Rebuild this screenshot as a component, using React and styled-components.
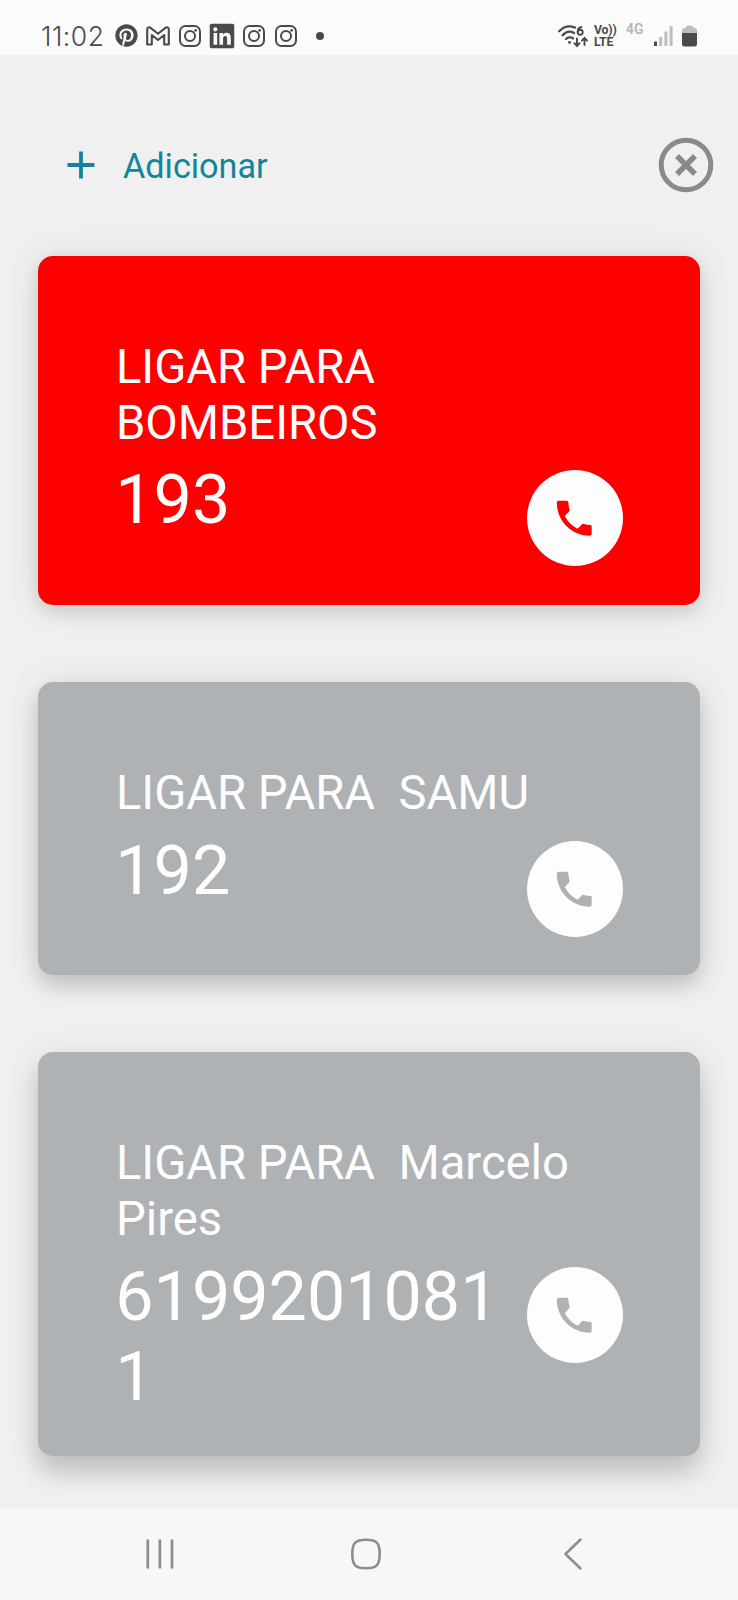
import styled, { createGlobalStyle } from 'styled-components';
import { FaPinterest, FaLinkedin } from 'react-icons/fa';

const GlobalStyle = createGlobalStyle`
  * {
    box-sizing: border-box;
  }
  body {
    margin: 0;
    background: #f0f0f0;
    font-family: Roboto, "Liberation Sans", sans-serif;
  }
`;

const Screen = styled.div`
  display: flex;
  flex-direction: column;
  width: 738px;
  height: 1600px;
  overflow: hidden;
  background: #f0f0f0;
`;

const StatusBar = styled.header`
  display: flex;
  justify-content: space-between;
  height: 55px;
  padding: 17px 41px 0 41px;
  background: #fbfbfb;
  color: #4a4a4a;
`;

const StatusGroup = styled.div`
  display: flex;
  align-items: center;
  height: 37px;
`;

const Clock = styled.span`
  width: 74px;
  font-family: Inter, sans-serif;
  font-size: 26.5px;
  font-weight: 300;
  letter-spacing: 0.5px;
`;

const Notifications = styled.div`
  display: flex;
  align-items: center;
  gap: 8px;

  svg {
    display: block;
  }
`;

const LinkedinIcon = styled(FaLinkedin)`
  width: 28px;
  height: 28px;
  margin: 0 -2px;
`;

const MoreDot = styled.span`
  width: 8px;
  height: 8px;
  margin-left: 10px;
  border-radius: 50%;
  background: #4a4a4a;
`;

const VoLte = styled.div`
  display: flex;
  flex-direction: column;
  width: 22px;
  margin: 2px 10px 0 5px;
  font-size: 12.3px;
  font-weight: 700;
  letter-spacing: -0.2px;
  line-height: 11.8px;
  white-space: nowrap;
`;

const NetworkType = styled.span`
  width: 20px;
  height: 28px;
  margin-right: 8px;
  color: #b3b3b3;
  font-size: 13.8px;
  font-weight: 600;
  line-height: 15px;
`;

const Toolbar = styled.div`
  display: flex;
  align-items: center;
  justify-content: space-between;
  height: 56px;
  margin: 82px 24px 63px 67px;
`;

const AddButton = styled.button`
  display: flex;
  align-items: center;
  gap: 28px;
  padding: 0;
  border: 0;
  background: none;
  color: #12859a;
  font-family: inherit;
  font-size: 34.2px;
  line-height: 40px;
`;

const AddLabel = styled.span`
  padding-top: 2px;
`;

const CloseButton = styled.button`
  display: flex;
  padding: 0;
  border: 0;
  background: none;
`;

const ContactList = styled.main`
  display: flex;
  flex: 1;
  flex-direction: column;
  gap: 77.5px;
  min-height: 0;
  padding: 0 38.3px;
`;

const Card = styled.section`
  flex: none;
  padding: 84px 77px 38.2px;
  border-radius: 15px;
  background: ${({ $color }) => $color};
  box-shadow: ${({ $shadow }) => $shadow};
  color: #fdfdfd;
`;

const CardTitle = styled.h2`
  margin: 0 0 10px;
  padding-left: 0.6px;
  font-size: 47.2px;
  font-weight: 400;
  line-height: 55.7px;
  white-space: pre-wrap;
`;

const CardRow = styled.div`
  display: flex;
  align-items: flex-start;
`;

const PhoneNumber = styled.span`
  flex: 1;
  min-width: 0;
  font-size: 68.2px;
  line-height: 79.8px;
  overflow-wrap: anywhere;
`;

const CallButton = styled.button`
  display: flex;
  flex: none;
  align-items: center;
  justify-content: center;
  width: 96px;
  height: 96px;
  margin-top: 9px;
  padding: 0;
  border: 0;
  border-radius: 50%;
  background: #fdfdfd;
  color: ${({ $color }) => $color};
`;

const NavBar = styled.nav`
  display: flex;
  align-items: center;
  justify-content: space-between;
  height: 92px;
  padding: 0 155px 0 144px;
  background: #f7f7f9;
`;

const InstagramIcon = () => (
  <svg width="24" height="24" viewBox="0 0 24 24" fill="none" stroke="currentColor" strokeWidth="2">
    <rect x="2" y="2" width="20" height="20" rx="5.5" />
    <circle cx="12" cy="12" r="5" />
    <circle cx="17.6" cy="6.4" r="1.3" fill="currentColor" stroke="none" />
  </svg>
);

const GmailIcon = () => (
  <svg width="24" height="24" viewBox="0 0 24 24" fill="none" stroke="currentColor" strokeWidth="2.1" strokeLinejoin="round">
    <path d="M1.200 20.500V5.400C1.200 3.300 3.200 2.800 4.600 3.900L12 9.800l7.400-5.900C20.800 2.800 22.800 3.300 22.800 5.400v15.100h-4.600V11L12 16 5.800 11v9.500z" />
  </svg>
);

const WifiIcon = () => (
  <svg width="31" height="24" viewBox="0 0 31 24" fill="none" stroke="currentColor" strokeWidth="2.3" strokeLinecap="round">
    <path d="M1.200 7.200C6 2.300 12 1.600 17 3.600M4.600 11.200C8 7.600 12.500 7 16 9M8 15c2-2 5-2.300 7-.6" />
    <circle cx="11.500" cy="18.400" r="1.400" fill="currentColor" stroke="none" />
    <path d="M23.500 3C21 3.400 19.700 5.300 19.700 8" strokeWidth="1.900" />
    <circle cx="22.200" cy="8.300" r="2.500" strokeWidth="1.900" />
    <path d="M19 14.500v7.300m-2.600-2.600 2.600 2.800 2.600-2.800M26.500 21v-7m-2.600 2.600 2.600-2.800 2.600 2.800" strokeWidth="1.900" />
  </svg>
);

const SignalIcon = () => (
  <svg width="19" height="22" viewBox="0 0 19 22">
    <rect x="0" y="16.5" width="3" height="4.5" fill="#4a4a4a" />
    <g fill="#bdbdbd">
      <rect x="5.2" y="12" width="3" height="9" />
      <rect x="10.4" y="6.5" width="3" height="14.5" />
      <rect x="15.6" y="1" width="3" height="20" />
    </g>
  </svg>
);

const Battery = styled.svg`
  width: 15px;
  height: 22px;
  margin-left: 9px;
`;

const BatteryIcon = () => (
  <Battery viewBox="0 0 15 22">
    <path d="M3 3 4.500 1.200Q5 .5 6 .5h3q1 0 1.500.7L12 3h.5Q15 3 15 5.500V9H0V5.500Q0 3 2.500 3z" fill="#bdbdbd" />
    <path d="M0 8h15v11q0 2.500-2.500 2.500h-10Q0 21.500 0 19z" fill="#4a4a4a" />
  </Battery>
);

const PlusIcon = () => (
  <svg width="28" height="28" viewBox="0 0 28 28" stroke="currentColor" strokeWidth="3.8">
    <path d="M14 .5v27M.5 14h27" />
  </svg>
);

const CloseIcon = () => (
  <svg width="56" height="56" viewBox="0 0 56 56" fill="none" stroke="#8a8a8a">
    <circle cx="28" cy="28" r="24.8" strokeWidth="5" />
    <path d="m19 19 18 18M37 19 19 37" strokeWidth="5.6" />
  </svg>
);

const PhoneIcon = () => (
  <svg width="46.5" height="46.5" viewBox="0 0 24 24" fill="currentColor">
    <path d="M20.500 15.500c-1.250 0-2.450-.2-3.570-.57-.35-.11-.74-.03-1.020.24l-2.200 2.200c-2.830-1.440-5.150-3.750-6.590-6.590l2.200-2.210c.28-.26.36-.65.25-1C9.200 6.450 9 5.250 9 4c0-.55-.45-1-1-1H4c-.55 0-1 .45-1 1 0 9.390 7.610 17 17 17 .55 0 1-.45 1-1v-3.500c0-.55-.2-1-.5-1z" />
  </svg>
);

const RecentsIcon = () => (
  <svg width="32" height="32" viewBox="0 0 32 32" stroke="#8d8d8f" strokeWidth="2.7" strokeLinecap="round">
    <path d="M3.8 2.500v27M15.900 2.500v27M28 2.500v27" />
  </svg>
);

const Home = styled.svg`
  width: 32px;
  height: 32px;
  margin-right: 7px;
`;

const HomeIcon = () => (
  <Home viewBox="0 0 32 32" fill="none" stroke="#8d8d8f" strokeWidth="2.6">
    <path d="M16 1.800c10.500 0 13.700 3 13.700 14.200S26.500 30.200 16 30.200 2.300 27.200 2.300 16 5.500 1.800 16 1.800z" />
  </Home>
);

const BackIcon = () => (
  <svg width="20" height="32" viewBox="0 0 20 32" fill="none" stroke="#8d8d8f" strokeWidth="2.5" strokeLinecap="round" strokeLinejoin="round">
    <path d="M17.500 1.500 2.500 16l15 14.500" />
  </svg>
);

const contacts = [
  {
    title: 'LIGAR PARA BOMBEIROS',
    number: '193',
    color: '#ff0000',
    shadow: '0 8px 18px rgba(0, 0, 0, 0.1), 0 2px 34px rgba(0, 0, 0, 0.1)',
  },
  {
    title: 'LIGAR PARA  SAMU',
    number: '192',
    color: '#aeb2b5',
    shadow: '0 12px 20px rgba(0, 0, 0, 0.14), 0 3px 34px rgba(0, 0, 0, 0.1)',
  },
  {
    title: 'LIGAR PARA  Marcelo Pires',
    number: '61992010811',
    color: '#aeb2b5',
    shadow: '0 18px 24px rgba(0, 0, 0, 0.15), 0 5px 34px rgba(0, 0, 0, 0.1)',
  },
];

export default function App() {
  return (
    <Screen>
      <GlobalStyle />
      <StatusBar>
        <StatusGroup>
          <Clock>11:02</Clock>
          <Notifications>
            <FaPinterest size={23} />
            <GmailIcon />
            <InstagramIcon />
            <LinkedinIcon />
            <InstagramIcon />
            <InstagramIcon />
            <MoreDot />
          </Notifications>
        </StatusGroup>
        <StatusGroup>
          <WifiIcon />
          <VoLte>
            <span>Vo))</span>
            <span>LTE</span>
          </VoLte>
          <NetworkType>4G</NetworkType>
          <SignalIcon />
          <BatteryIcon />
        </StatusGroup>
      </StatusBar>
      <Toolbar>
        <AddButton>
          <PlusIcon />
          <AddLabel>Adicionar</AddLabel>
        </AddButton>
        <CloseButton aria-label="Fechar">
          <CloseIcon />
        </CloseButton>
      </Toolbar>
      <ContactList>
        {contacts.map(({ title, number, color, shadow }) => (
          <Card key={number} $color={color} $shadow={shadow}>
            <CardTitle>{title}</CardTitle>
            <CardRow>
              <PhoneNumber>{number}</PhoneNumber>
              <CallButton $color={color}>
                <PhoneIcon />
              </CallButton>
            </CardRow>
          </Card>
        ))}
      </ContactList>
      <NavBar>
        <RecentsIcon />
        <HomeIcon />
        <BackIcon />
      </NavBar>
    </Screen>
  );
}
